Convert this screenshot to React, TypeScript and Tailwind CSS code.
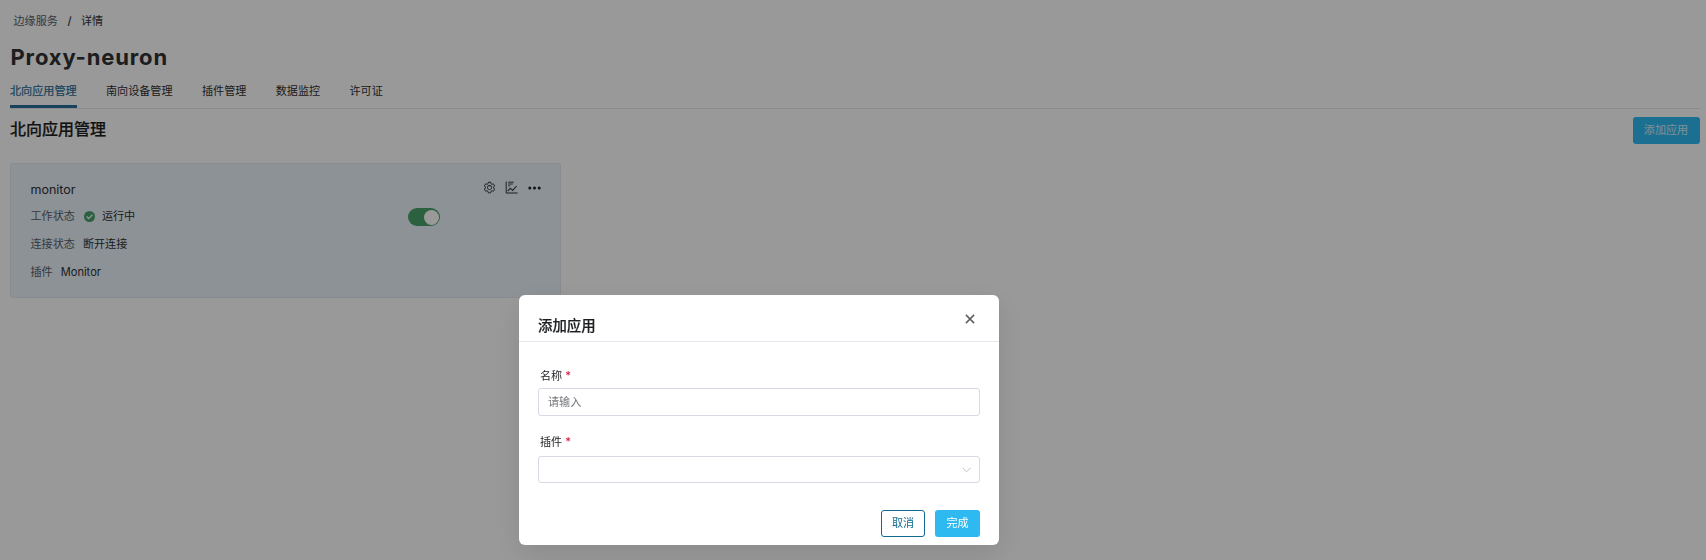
import React from "react";

const tabs = ["北向应用管理", "南向设备管理", "插件管理", "数据监控", "许可证"];

function GearIcon() {
  return (
    <svg viewBox="0 0 1024 1024" className="h-[13px] w-[13px]" fill="#303133">
      <path d="M600.704 64a32 32 0 0 1 30.464 22.208l35.2 109.376c14.784 7.232 28.928 15.36 42.432 24.512l112.384-24.192a32 32 0 0 1 34.432 15.36L944.32 364.8a32 32 0 0 1-4.032 37.504l-77.12 85.12a357.12 357.12 0 0 1 0 49.024l77.12 85.248a32 32 0 0 1 4.032 37.504l-88.704 153.6a32 32 0 0 1-34.432 15.296L708.8 803.904c-13.44 9.088-27.648 17.28-42.368 24.512l-35.264 109.376A32 32 0 0 1 600.704 960H423.296a32 32 0 0 1-30.464-22.208L357.696 828.48a351.616 351.616 0 0 1-42.56-24.64l-112.32 24.256a32 32 0 0 1-34.432-15.36L79.68 659.2a32 32 0 0 1 4.032-37.504l77.12-85.248a357.12 357.12 0 0 1 0-48.896l-77.12-85.248A32 32 0 0 1 79.68 364.8l88.704-153.6a32 32 0 0 1 34.432-15.296l112.32 24.256c13.568-9.152 27.776-17.408 42.56-24.64l35.2-109.312A32 32 0 0 1 423.232 64H600.64zm-23.424 64H446.72l-36.352 113.088-24.512 11.968a294.113 294.113 0 0 0-34.816 20.096l-22.656 15.36-116.224-25.088-65.28 113.152 79.68 88.192-1.92 27.136a293.12 293.12 0 0 0 0 40.192l1.92 27.136-79.808 88.192 65.344 113.152 116.224-25.024 22.656 15.296a294.113 294.113 0 0 0 34.816 20.096l24.512 11.968L446.72 896h130.688l36.48-113.152 24.448-11.904a288.282 288.282 0 0 0 34.752-20.096l22.592-15.296 116.288 25.024 65.28-113.152-79.744-88.192 1.92-27.136a293.12 293.12 0 0 0 0-40.256l-1.92-27.136 79.808-88.128-65.344-113.152-116.288 24.96-22.592-15.232a287.616 287.616 0 0 0-34.752-20.096l-24.448-11.904L577.344 128zM512 320a192 192 0 1 1 0 384 192 192 0 0 1 0-384zm0 64a128 128 0 1 0 0 256 128 128 0 0 0 0-256z" />
    </svg>
  );
}

function ChartIcon() {
  return (
    <svg viewBox="0 0 13 13" className="mr-[1px] -ml-[1px] h-[13px] w-[13px]" fill="none" stroke="#303133">
      <path d="M1.2 0.5V12H12.6" strokeWidth="1" />
      <path d="M3.2 1.2H8.8M3.2 3H7.8M3.2 4.8H5.2" strokeWidth="0.9" />
      <path d="M2.8 10.2L5.2 7.2L7.6 9.4L11.6 5" strokeWidth="1.1" />
    </svg>
  );
}

function DotsIcon() {
  return (
    <svg viewBox="0 0 13 4" className="h-1 w-[13px]" fill="#1d1f22">
      <circle cx="1.8" cy="2" r="1.5" />
      <circle cx="6.5" cy="2" r="1.5" />
      <circle cx="11.2" cy="2" r="1.5" />
    </svg>
  );
}

function CheckBadge() {
  return (
    <svg viewBox="0 0 11 11" className="mr-[7px] ml-[1px] h-[11px] w-[11px]">
      <circle cx="5.5" cy="5.5" r="5.5" fill="#4aa26c" />
      <path d="M2.6 5.6L4.7 7.6L8.4 3.8" fill="none" stroke="#eff5f8" strokeWidth="1.4" />
    </svg>
  );
}

function Row({ label, children }: { label: string; children: React.ReactNode }) {
  return (
    <div className="flex h-7 items-center">
      <span className="mr-[8px] text-[#5b5d66]">{label}</span>
      {children}
    </div>
  );
}

function FieldLabel({ text }: { text: string }) {
  return (
    <div className="flex h-4 items-center pl-[2px] text-[#1d1f22]">
      {text}
      <span className="ml-[3px] font-medium text-[#d6204b]">*</span>
    </div>
  );
}

function AddDialog() {
  return (
    <div className="flex h-[250px] w-[480px] flex-col rounded-md bg-white shadow-[0_10px_32px_rgba(0,0,0,0.10)]">
      <header className="flex h-[47px] justify-between border-b border-[#e6e5f0] pr-[24px] pl-[19px]">
        <h2 className="pt-[21px] text-[14.4px] leading-5 font-medium text-[#1d1f22] [-webkit-text-stroke:0.2px]">添加应用</h2>
        <svg viewBox="0 0 10 10" className="mt-[18.5px] h-[10px] w-[10px]" fill="none" stroke="#5c5e61" strokeWidth="1.5">
          <path d="M0.9 0.9L9.1 9.1M9.1 0.9L0.9 9.1" />
        </svg>
      </header>
      <div className="flex flex-col px-[19px] pt-[26px]">
        <FieldLabel text="名称" />
        <div className="mt-[4px] flex h-[28px] items-center rounded-[3px] border border-[#d9d8e6] pl-[9px] text-[#77797e]">
          请输入
        </div>
        <div className="h-[18px]" />
        <FieldLabel text="插件" />
        <div className="mt-[6px] flex h-[27px] items-center justify-end rounded-[3px] border border-[#d9d8e6] pr-[8px]">
          <svg viewBox="0 0 9 6" className="h-[6px] w-[9px]" fill="none" stroke="#bfc1c6" strokeWidth="1">
            <path d="M0.5 0.8L4.5 4.8L8.5 0.8" />
          </svg>
        </div>
        <div className="mt-[27px] flex justify-end gap-[10px]">
          <button className="h-[27px] w-[44px] rounded-[3px] border border-[#11698f] pb-[1px] text-[#11698f]">取消</button>
          <button className="h-[27px] w-[45px] rounded-[3px] bg-[#2eb9f1] pb-[1px] text-white">完成</button>
        </div>
      </div>
    </div>
  );
}

export default function App() {
  return (
    <div className="h-[560px] w-[1706px] overflow-hidden bg-white font-['Inter','Noto_Sans_CJK_SC',sans-serif] text-[11.1px] leading-4 text-[#303133]">
      <div className="flex flex-col pr-[6px] pl-[10px]">
        <nav className="mt-[13px] flex h-4 items-center pl-[3.5px]">
          <span className="text-[#5b5d66]">边缘服务</span>
          <span className="mr-[9.5px] ml-[9.5px] font-medium">/</span>
          <span>详情</span>
        </nav>
        <h1 className="mt-[14px] h-7 pl-[0.5px] text-[22px] leading-7 font-bold tracking-[0.85px] text-[#303133]">Proxy-neuron</h1>
        <div className="mt-[12px] flex h-[26px] gap-[29.4px] border-b border-[#e6e6ef]">
          {tabs.map((tab, i) => (
            <div
              key={tab}
              className={
                i === 0
                  ? "h-[25px] border-b-[3px] border-[#296f98] text-[#296f98] [-webkit-text-stroke:0.2px]"
                  : "h-[25px]"
              }
            >
              {tab}
            </div>
          ))}
        </div>
        <div className="flex h-[54px] items-start justify-between">
          <h3 className="mt-[10px] text-[16px] leading-5 font-medium text-[#1d1f22] [-webkit-text-stroke:0.2px]">北向应用管理</h3>
          <button className="mt-[8px] h-[27px] w-[67px] rounded-[3px] bg-[#2eb9f1] pr-[1px] pb-[1px] text-white/80">添加应用</button>
        </div>
        <section className="flex h-[135px] w-[551px] flex-col rounded-[3px] border border-[#e3e9f1] bg-[#ebf4fa] pt-[17px] pr-[19px] pl-[19.5px]">
          <div className="flex h-[21px] items-start justify-between">
            <span className="text-[12.5px] leading-[18px]">monitor</span>
            <div className="flex items-center gap-[9.5px]">
              <GearIcon />
              <ChartIcon />
              <DotsIcon />
            </div>
          </div>
          <div className="flex items-center">
            <div className="w-[377.5px]">
              <Row label="工作状态">
                <CheckBadge />
                <span>运行中</span>
              </Row>
            </div>
            <div className="mt-[2px] flex h-[18px] w-[32px] items-center justify-end rounded-full bg-[#4aa26c] pr-[1px]">
              <span className="h-[15px] w-[15px] rounded-full bg-white" />
            </div>
          </div>
          <Row label="连接状态">断开连接</Row>
          <Row label="插件">Monitor</Row>
        </section>
      </div>
      <div className="fixed inset-0 flex items-start bg-black/40 pt-[295px] pl-[519px]">
        <AddDialog />
      </div>
    </div>
  );
}
